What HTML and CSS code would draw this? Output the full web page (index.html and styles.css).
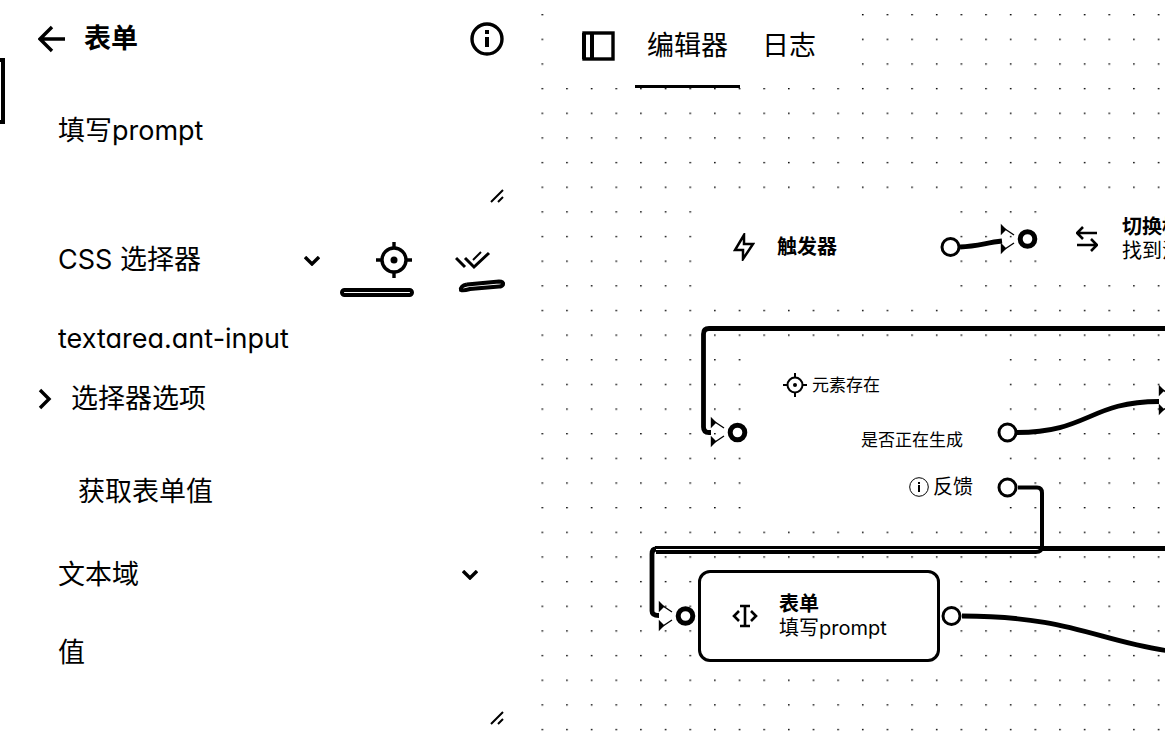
FILE: index.html
```html
<!DOCTYPE html>
<html lang="zh-CN">
<head>
<meta charset="utf-8">
<meta name="viewport" content="width=device-width, initial-scale=1">
<title>表单</title>
<link rel="stylesheet" href="styles.css">
</head>
<body>
<div class="app">
  <aside class="sidebar">
    <span class="nav-marker"></span>
    <header class="panel-header">
      <button class="icon-button" type="button" aria-label="返回">
        <svg width="28" height="28" viewBox="0 0 28 28" fill="none" stroke="currentColor" stroke-width="3.4"><path d="M27 14H3M14 2 2 14l12 12"/></svg>
      </button>
      <h1 class="panel-title">表单</h1>
      <button class="icon-button info-button" type="button" aria-label="信息">
        <svg width="34" height="34" viewBox="0 0 34 34" fill="none" stroke="currentColor"><circle cx="17" cy="17" r="15" stroke-width="3.4"/><path d="M17 15v10M17 8v4" stroke-width="4"/></svg>
      </button>
    </header>

    <form class="fields">
      <div class="area">
        <textarea class="control" aria-label="描述">填写prompt</textarea>
        <svg class="grip" width="14" height="14" viewBox="0 0 14 14" stroke="currentColor" stroke-width="2"><path d="M1 13 13 1M8 13l5-5"/></svg>
      </div>

      <div class="selector-row">
        <div class="select selector-type">
          <select class="control" aria-label="选择器类型"><option>CSS 选择器</option></select>
          <svg class="chevron" width="16" height="10" viewBox="0 0 16 10" fill="none" stroke="currentColor" stroke-width="3.4"><path d="m1 1 7 7 7-7"/></svg>
        </div>
        <button class="icon-button" type="button" aria-label="选择元素">
          <svg width="38" height="38" viewBox="0 0 38 38" fill="none" stroke="currentColor" stroke-width="3.4"><circle cx="19" cy="19" r="12"/><path d="M19 1v7M19 30v7M1 19h7M30 19h7"/><circle cx="19" cy="19" r="3.5" fill="currentColor" stroke="none"/></svg>
        </button>
        <button class="icon-button verify-button" type="button" aria-label="验证选择器">
          <svg width="36" height="20" viewBox="0 0 36 20" fill="none" stroke="currentColor" stroke-width="3"><path d="m1 8 9 9M10 8l9 9L34 3"/><path d="m18 10 8-8" stroke-width="2"/></svg>
        </button>
        <svg class="marks" width="170" height="24" viewBox="0 0 170 24" fill="none" stroke="currentColor" stroke-width="4"><rect x="5" y="13" width="70" height="5" rx="2.5"/><path d="M130 7.500 162 4.500q5 0 4 3q-1 2-4 2l-29 2.500q-7 2-9 1q-1-4 6-5.500"/></svg>
      </div>

      <input class="control selector-input" type="text" aria-label="选择器" value="textarea.ant-input">

      <button class="options-button" type="button">
        <svg width="14" height="22" viewBox="0 0 14 22" fill="none" stroke="currentColor" stroke-width="3.4"><path d="m2 2 9 9-9 9"/></svg>
        选择器选项
      </button>

      <label class="check"><input type="checkbox">获取表单值</label>

      <div class="select">
        <select class="control" aria-label="表单类型"><option>文本域</option></select>
        <svg class="chevron chevron-wide" width="16" height="10" viewBox="0 0 16 10" fill="none" stroke="currentColor" stroke-width="3.4"><path d="m1 1 7 7 7-7"/></svg>
      </div>

      <div class="area value-area">
        <textarea class="control" placeholder="值" aria-label="值"></textarea>
        <svg class="grip" width="14" height="14" viewBox="0 0 14 14" stroke="currentColor" stroke-width="2"><path d="M1 13 13 1M8 13l5-5"/></svg>
      </div>
    </form>
  </aside>

  <main class="canvas">
    <svg class="layer" width="100%" height="100%">
      <defs>
        <pattern id="dots" width="20" height="20" patternUnits="userSpaceOnUse" patternTransform="translate(10.500 14) scale(1.2325)"><rect width="1.3" height="1.1"/></pattern>
      </defs>
      <rect width="100%" height="100%" fill="url(#dots)"/>
    </svg>

    <section class="node trigger">
      <svg width="22" height="28" viewBox="0 0 22 28" fill="none" stroke="currentColor" stroke-width="2.5"><path d="M11 2 2 17h8v9l10-15h-9z"/></svg>
      <div class="node-text"><strong>触发器</strong></div>
    </section>
    <section class="node switch-tab">
      <svg width="22" height="26" viewBox="0 0 22 26" fill="none" stroke="currentColor" stroke-width="2.6"><path d="M21 7H2M7 1 1 7l6 6M1 19h19M15 13l6 6-6 6"/></svg>
      <div class="node-text"><strong>切换标签页</strong><span>找到活动标签</span></div>
    </section>
    <section class="node exists">
      <div class="exists-title">
        <svg width="24" height="24" viewBox="0 0 24 24" fill="none" stroke="currentColor" stroke-width="2"><circle cx="12" cy="12" r="7.5"/><path d="M12 0v5M12 19v5M0 12h5M19 12h5"/><circle cx="12" cy="12" r="2" fill="currentColor" stroke="none"/></svg>
        元素存在
      </div>
      <p class="condition">是否正在生成</p>
      <p class="fallback">
        <svg width="20" height="20" viewBox="0 0 20 20" fill="none" stroke="currentColor"><circle cx="10" cy="10" r="9.3"/><path d="M10 8v7M10 5v2" stroke-width="2"/></svg>
        反馈
      </p>
    </section>
    <section class="node form-node">
      <svg width="28" height="24" viewBox="0 0 28 24" fill="none" stroke="currentColor" stroke-width="2.6"><path d="M8 7 3 12l5 5M20 7l5 5-5 5M9 2h10M9 22h10M14 2v20"/></svg>
      <div class="node-text"><strong>表单</strong><span>填写prompt</span></div>
    </section>

    <svg class="layer edges" width="100%" height="100%" fill="none" stroke="currentColor">
      <defs>
        <g id="head" stroke-width="1.4"><path d="M1.500-13.500l4 4-4 4zM1.500 13.500l4-4-4-4z" fill="currentColor"/><path d="M5-10 14-4M5 10l9-6"/></g>
      </defs>
      <g transform="translate(-531 0)">
        <g stroke-width="4.8">
          <path d="M960 247C978 246 985 243 1002 241"/>
          <path d="M2400 328.500H709Q703.500 328.500 703.500 334V427Q703.500 432.500 709 432.500H711"/>
          <path d="M1017 432.500C1088 432.500 1090 401.500 1159 401.500"/>
          <path d="M962 616C1070 616 1100 642 1170 651"/>
          <path d="M1040 548.500H2400"/>
          <path d="M656 549Q652 549 652 554V611Q652 615.500 659 615.500"/>
        </g>
        <path d="M1018 487.500H1037Q1042 487.500 1042 493V546Q1042 552 1036 552H656" stroke-width="4"/>
        <path d="M655 547.500H1042" stroke-width="3"/>
        <use href="#head" x="1000" y="239"/>
        <use href="#head" x="710" y="432"/>
        <use href="#head" x="1158" y="400"/>
        <use href="#head" x="658" y="616"/>
        <g fill="#fff" stroke-width="3">
          <circle cx="950.500" cy="247" r="8.500"/>
          <circle cx="1007.500" cy="432.500" r="8.500"/>
          <circle cx="1007.500" cy="487.500" r="8.500"/>
          <circle cx="951.500" cy="616" r="8.500"/>
        </g>
        <g fill="#fff" stroke-width="5">
          <circle cx="1027.500" cy="239" r="7.300"/>
          <circle cx="737.500" cy="432.500" r="7.300"/>
          <circle cx="685.500" cy="616" r="7.300"/>
        </g>
      </g>
    </svg>

    <nav class="toolbar">
      <button class="icon-button" type="button" aria-label="切换侧栏">
        <svg width="33" height="30" viewBox="0 0 33 30" fill="none" stroke="currentColor" stroke-width="3.4"><rect x="2" y="2" width="29" height="26"/><path d="M10 2v26M2 2v26" stroke-width="4"/></svg>
      </button>
      <button class="tab tab-active" type="button">编辑器</button>
      <button class="tab" type="button">日志</button>
    </nav>
  </main>
</div>
</body>
</html>
```

FILE: styles.css
```css
* { box-sizing: border-box; }

body {
  margin: 0;
  background: #fff;
  color: #000;
  font-family: Inter, "Noto Sans CJK SC", sans-serif;
  font-size: 27px;
  line-height: 40px;
  font-feature-settings: "cv11";
}

svg { display: block; flex: none; }
p, h1 { margin: 0; }

button, input, select, textarea {
  margin: 0;
  padding: 0;
  border: 0;
  background: none;
  color: inherit;
  font: inherit;
  font-feature-settings: inherit;
}

.app { display: flex; min-height: 100vh; }

.sidebar {
  position: relative;
  flex: none;
  width: 531px;
  padding: 0 27px 8px 38px;
}

.nav-marker {
  position: absolute;
  left: 0;
  top: 58px;
  width: 5px;
  height: 66px;
  border: solid;
  border-width: 4px 4px 4px 0;
}

.panel-header {
  display: flex;
  align-items: center;
  height: 78px;
  gap: 18px;
}
.panel-title { font-size: 27px; line-height: 40px; font-weight: 700; }
.icon-button { display: flex; flex: none; }
.info-button { margin-left: auto; }

.fields { display: flex; flex-direction: column; padding-top: 25px; }

.control {
  display: block;
  width: 100%;
  height: 56px;
  padding: 0 20px;
  outline: 0;
}
select.control { appearance: none; }
textarea.control { height: 102px; padding: 8px 20px; resize: none; overflow: hidden; }
.control::placeholder { color: #000; opacity: 1; }

.area, .select { position: relative; }
.grip { position: absolute; right: 0; bottom: 2px; }
.chevron { position: absolute; right: 9px; top: 24px; pointer-events: none; }
.chevron-wide { right: 26px; top: 23px; }

.selector-row { position: relative; display: flex; align-items: center; margin-top: 27px; }
.selector-type { flex: 1; margin-right: 46px; }
.verify-button { margin: 0 13px 0 42px; }
.marks { position: absolute; right: -3px; bottom: -13px; }

.selector-input { margin-top: 22px; }

.options-button {
  display: flex;
  align-items: center;
  gap: 19px;
  margin-top: 13px;
}

.check { display: flex; align-items: center; gap: 16px; margin: 53px 0 35px; }
.check input { appearance: none; width: 24px; height: 24px; }
.value-area { margin-top: 22px; }

.canvas { position: relative; flex: 1; min-width: 0; overflow: hidden; }
.layer { position: absolute; inset: 0; }
.edges { pointer-events: none; }

.toolbar {
  position: absolute;
  left: 29px;
  top: 0;
  display: flex;
  align-items: center;
  padding: 4px 22px 0 22px;
  background: #fff;
}
.toolbar .icon-button { margin-right: 20px; }
.tab { height: 84px; padding: 2px 12px 0; border-bottom: 3px solid transparent; }
.tab-active { margin-right: 10px; border-color: #000; }

.node {
  position: absolute;
  display: flex;
  align-items: center;
  width: 242px;
  height: 92px;
  padding-left: 32px;
  border: 3px solid transparent;
  border-radius: 12px;
  background: #fff;
  font-size: 20px;
  line-height: 24px;
  white-space: nowrap;
}
.node-text { display: flex; flex-direction: column; }
.trigger { left: 167px; top: 201px; gap: 22px; }
.switch-tab { left: 510px; top: 193px; gap: 24px; }
.form-node { left: 167px; top: 570px; gap: 20px; padding-left: 30px; border-color: #000; }

.exists {
  left: 219px;
  top: 342px;
  flex-direction: column;
  align-items: stretch;
  width: 250px;
  height: auto;
  padding: 28px 24px 24px 30px;
}
.exists-title { display: flex; align-items: center; gap: 5px; font-size: 17px; }
.condition { margin-top: 31px; padding-right: 10px; font-size: 17px; text-align: right; }
.fallback { display: flex; align-items: center; justify-content: flex-end; gap: 4px; margin-top: 23px; }
```
